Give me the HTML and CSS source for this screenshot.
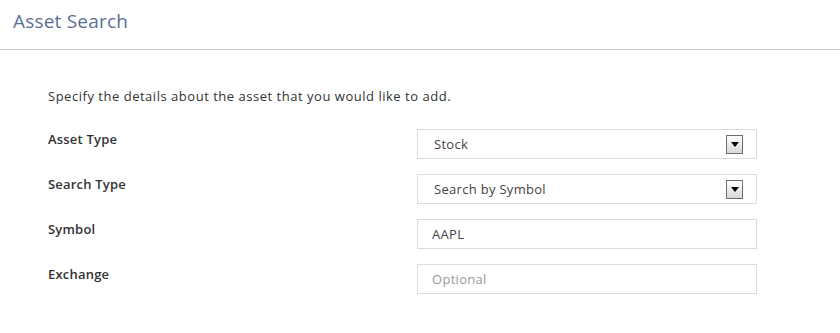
FILE: index.html
```html
<!DOCTYPE html>
<html lang="en">

<head>
    <meta charset="UTF-8">
    <title>Asset Search</title>
    <link rel="stylesheet" href="styles.css">
</head>

<body>
    <div class="header">
        <h1 class="title">Asset Search</h1>
    </div>
    <div class="content">
        <p class="intro">Specify the details about the asset that you would like to add.</p>
        <form class="assetform">
            <div class="form-row">
                <label class="form-label">Asset Type</label>
                <div class="form-control select">
                    <span class="select-value">Stock</span>
                    <span class="select-btn">
                        <svg width="8" height="5" viewBox="0 0 8 5"><path d="M0 0h8L4 5z" fill="#000"/></svg>
                    </span>
                </div>
            </div>
            <div class="form-row">
                <label class="form-label">Search Type</label>
                <div class="form-control select">
                    <span class="select-value">Search by Symbol</span>
                    <span class="select-btn">
                        <svg width="8" height="5" viewBox="0 0 8 5"><path d="M0 0h8L4 5z" fill="#000"/></svg>
                    </span>
                </div>
            </div>
            <div class="form-row">
                <label class="form-label">Symbol</label>
                <input class="form-control textbox" type="text" value="AAPL">
            </div>
            <div class="form-row">
                <label class="form-label">Exchange</label>
                <input class="form-control textbox" type="text" placeholder="Optional">
            </div>
        </form>
    </div>
</body>

</html>
```

FILE: styles.css
```css
body {
    margin: 0;
    background: #fff;
    font-family: 'Open Sans', Lato, sans-serif;
    color: #333;
}

.header {
    height: 49px;
    border-bottom: 1px solid #c9c9c9;
    padding-left: 13px;
}

.title {
    margin: 0;
    padding-top: 8px;
    font-size: 19px;
    line-height: 26px;
    font-weight: normal;
    letter-spacing: 0.2px;
    color: #5b6f93;
}

.content {
    padding: 38px 0 0 48px;
}

.intro {
    margin: 0 0 25px 0;
    font-size: 13px;
    line-height: 16px;
    letter-spacing: 0.52px;
}

.form-row {
    display: flex;
    align-items: flex-start;
    height: 45px;
}

.form-label {
    width: 369px;
    padding-top: 1px;
    font-size: 13px;
    font-weight: 600;
    letter-spacing: 0.2px;
    color: #333;
}

.form-control {
    box-sizing: border-box;
    width: 340px;
    height: 30px;
    border: 1px solid #dcdcdc;
    background: #fff;
    font-family: 'Open Sans', Lato, sans-serif;
    font-size: 13px;
    letter-spacing: 0.3px;
    color: #444;
}

/* 셀렉트 박스 */
.select {
    display: flex;
    align-items: center;
    justify-content: space-between;
    padding: 0 13px 0 16px;
}

.select-btn {
    box-sizing: border-box;
    width: 17px;
    height: 19px;
    border: 1px solid #6e6e6e;
    background: linear-gradient(#ffffff, #d8d8d8);
    display: flex;
    align-items: center;
    justify-content: center;
}

.select-btn svg {
    display: block;
}

.textbox {
    display: block;
    padding: 0 14px;
    outline: none;
}

.textbox::placeholder {
    color: #9a9a9a;
}
```
